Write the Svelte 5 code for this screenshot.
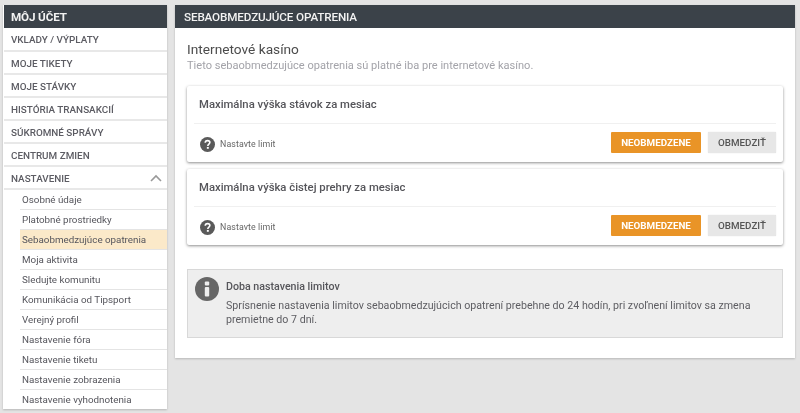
<script>
  const top = ['VKLADY / VÝPLATY','MOJE TIKETY','MOJE STÁVKY','HISTÓRIA TRANSAKCIÍ','SÚKROMNÉ SPRÁVY','CENTRUM ZMIEN'];
  const sub = ['Osobné údaje','Platobné prostriedky','Sebaobmedzujúce opatrenia','Moja aktivita','Sledujte komunitu','Komunikácia od Tipsport','Verejný profil','Nastavenie fóra','Nastavenie tiketu','Nastavenie zobrazenia','Nastavenie vyhodnotenia'];
  const limits = ['Maximálna výška stávok za mesiac','Maximálna výška čistej prehry za mesiac'];
</script>

<div class="page">
  <aside class="side">
    <h2 class="head">MÔJ ÚČET</h2>
    <ul class="menu">
      {#each top as t}
        <li class="item">{t}</li>
      {/each}
      <li class="item open">
        NASTAVENIE
        <svg class="chev" width="14" height="8" viewBox="0 0 14 8"><path d="M2 7 L7 2 L12 7" fill="none" stroke="#999" stroke-width="1.6"/></svg>
      </li>
    </ul>
    <ul class="sub">
      {#each sub as s, i}
        <li class:active={i === 2}>{s}</li>
      {/each}
    </ul>
  </aside>

  <main class="panel">
    <h1 class="head main-head">SEBAOBMEDZUJÚCE OPATRENIA</h1>
    <div class="body">
      <h3 class="title">Internetové kasíno</h3>
      <p class="lead">Tieto sebaobmedzujúce opatrenia sú platné iba pre internetové kasíno.</p>

      {#each limits as l}
        <section class="card">
          <div class="card-title">{l}</div>
          <div class="card-row">
            <svg class="q" width="15" height="15" viewBox="0 0 14 14">
              <circle cx="7" cy="7" r="7" fill="#5a5a5a"/>
              <path d="M4.9 5.4 C4.9 4.1 5.9 3.4 7.1 3.4 C8.3 3.4 9.2 4.1 9.2 5.2 C9.2 6.6 7.3 6.7 7.3 8.3" fill="none" stroke="#fff" stroke-width="1.5"/>
              <rect x="6.4" y="9.3" width="1.8" height="1.7" fill="#fff"/>
            </svg>
            <span class="hint">Nastavte limit</span>
            <button class="btn orange">NEOBMEDZENE</button>
            <button class="btn gray">OBMEDZIŤ</button>
          </div>
        </section>
      {/each}

      <section class="info">
        <svg class="i" width="24" height="24" viewBox="0 0 24 24">
          <circle cx="12" cy="12" r="12" fill="#666"/>
          <rect x="9.8" y="4.6" width="4.4" height="3.8" rx="1" fill="#eee"/>
          <rect x="9.8" y="10" width="4.4" height="9.6" rx="1" fill="#eee"/>
        </svg>
        <div class="info-text">
          <div class="info-title">Doba nastavenia limitov</div>
          <p>Sprísnenie nastavenia limitov sebaobmedzujúcich opatrení prebehne do 24 hodín, pri zvoľnení limitov sa zmena premietne do 7 dní.</p>
        </div>
      </section>
    </div>
  </main>
</div>

<style>
  :global(body) { margin: 0; background: #e4e4e4; }
  ul { list-style: none; margin: 0; padding: 0; }
  h1, h2, h3, p { margin: 0; }
  .page {
    width: 800px; height: 413px; box-sizing: border-box; overflow: hidden;
    display: flex; align-items: flex-start; gap: 8px;
    padding: 5px 5px 0 3px;
    font-family: Roboto, sans-serif; color: #4a4a4a;
    filter: blur(.35px);
  }
  .side {
    width: 164px; flex: none; background: #fff;
    box-shadow: 0 1px 2px rgba(0,0,0,.2);
  }
  .head {
    height: 23px; line-height: 24px; background: #3b4249; color: #f2f2f2;
    font-size: 11.7px; font-weight: 500; padding: 0 0 0 7px; letter-spacing: -.15px;
  }
  .side .head { margin-left: 1px; font-size: 11.7px; font-weight: 700; }
  .item {
    position: relative; height: 21px; line-height: 23px; padding-left: 7px;
    margin-left: 1px;
    border-bottom: 2px solid #e8e8e8;
    font-size: 9.9px; font-weight: 500; color: #5c5c63;
  }
  .item:first-child { height: 22px; line-height: 24px; }
  .chev { position: absolute; right: 4px; top: 7px; }
  .sub { margin-left: 17px; }
  .sub li {
    height: 19px; line-height: 19px; padding-left: 2px;
    border-bottom: 1px solid #e4e4e4;
    font-size: 9.8px; color: #55555c;
  }
  .sub li:last-child { border-bottom: 0; }
  .sub li.active { background: #fbe9c9; }
  .panel {
    flex: 1; background: #fff; box-shadow: 0 1px 2px rgba(0,0,0,.2);
  }
  .main-head { padding-left: 9px; }
  .body { padding: 13px 12px 20px 12px; }
  .title { font-size: 13.7px; font-weight: 400; color: #4c4c4c; line-height: 17px; }
  .lead { font-size: 11.05px; color: #a3a3a9; line-height: 16px; margin-bottom: 12px; }
  .card {
    background: #fff; border-radius: 2px; margin-bottom: 7.5px;
    box-shadow: 0 1px 3px rgba(0,0,0,.45);
    padding: 0 7px;
  }
  .card-title {
    height: 37.5px; line-height: 38px; padding-left: 5px; box-sizing: border-box;
    font-size: 11.3px; font-weight: 500; color: #55555a;
    border-bottom: 1px solid #f0f0f0;
  }
  .card-row { height: 38px; display: flex; align-items: center; padding-left: 6px; }
  .q { margin: 4px 5px 0 0; }
  .hint { font-size: 8.8px; color: #666; flex: 1; letter-spacing: .1px; margin-top: 3px; }
  .btn {
    height: 21.5px; border: 0; border-radius: 1px; padding: 0;
    font: 500 9.8px Roboto, sans-serif; cursor: pointer;
  }
  .orange { width: 90px; background: #e99427; color: #fff; margin-right: 7px; font-weight: 700; }
  .gray { width: 68px; background: #e7e7e7; color: #555; box-shadow: 0 0 1px rgba(0,0,0,.2); }
  .info {
    margin-top: 24px; display: flex; gap: 7px; height: 69px;
    box-sizing: border-box; padding: 7px 7px;
    background: #eee; border: 1px solid #d8d8d8;
  }
  .i { flex: none; }
  .info-text { font-size: 10.65px; color: #5d5d62; line-height: 14px; }
  .info-title { font-weight: 500; margin: 3px 0 5px; color: #55555a; }
</style>
